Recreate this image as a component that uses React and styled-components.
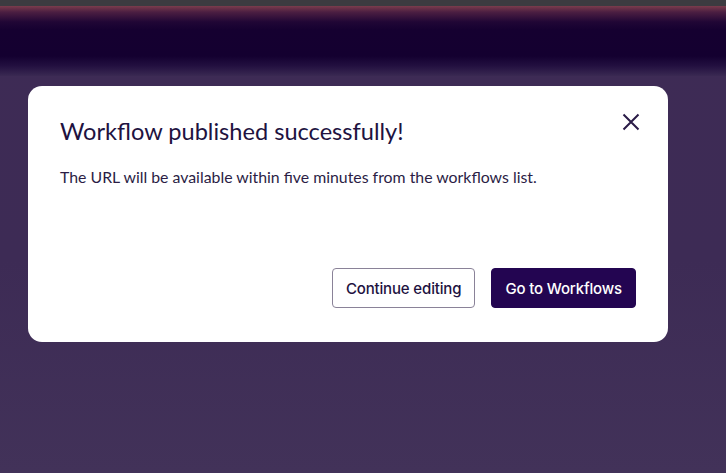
import React from 'react';
import styled, { createGlobalStyle } from 'styled-components';

const GlobalStyle = createGlobalStyle`
  html, body {
    margin: 0;
    padding: 0;
    height: 100%;
  }
  body {
    background: #3f2d57;
    font-family: Lato, "Noto Sans", sans-serif;
    overflow: hidden;
  }
`;

const Page = styled.div`
  width: 726px;
  height: 473px;
  display: flex;
  flex-direction: column;
  background: linear-gradient(180deg, #3e2b55 0%, #3d2b55 55%, #423259 100%);
`;

const TopStrip = styled.div`
  height: 6px;
  background: #3c3b40;
`;

const Header = styled.div`
  height: 70px;
  background: linear-gradient(
    180deg,
    #7a3c4c 0px,
    #4c1f42 6px,
    #200635 16px,
    #150030 24px,
    #140030 50px,
    #231040 60px,
    #3a2952 70px
  );
`;

const Body = styled.div`
  flex: 1;
`;

const Overlay = styled.div`
  position: fixed;
  inset: 0;
  padding: 86px 0 0 28px;
  display: flex;
  align-items: flex-start;
`;

const Dialog = styled.div`
  width: 640px;
  height: 256px;
  box-sizing: border-box;
  background: #ffffff;
  border-radius: 14px;
  padding: 30px 32px 34px 32px;
  display: flex;
  flex-direction: column;
  position: relative;
`;

const Title = styled.h2`
  margin: 0;
  font-family: Lato, "Noto Sans", sans-serif;
  font-size: 23.6px;
  font-weight: 400;
  line-height: 30px;
  color: #21123f;
`;

const Message = styled.p`
  margin: 20px 0 0;
  font-size: 15.85px;
  line-height: 22px;
  color: #2b1d45;
`;

const CloseButton = styled.button`
  position: absolute;
  top: 24px;
  right: 25px;
  width: 24px;
  height: 24px;
  padding: 0;
  border: none;
  background: none;
  display: flex;
  align-items: center;
  justify-content: center;
  color: #2a1b47;
  cursor: pointer;
`;

const Actions = styled.div`
  margin-top: auto;
  display: flex;
  justify-content: flex-end;
  gap: 16px;
`;

const Button = styled.button`
  height: 40px;
  box-sizing: border-box;
  padding: 0 13px;
  border-radius: 4px;
  font-family: Inter, "Noto Sans", sans-serif;
  font-size: 15px;
  font-weight: 500;
  letter-spacing: -0.15px;
  cursor: pointer;
  border: 1px solid ${p => (p.$primary ? '#230551' : '#8a8298')};
  background: ${p => (p.$primary ? '#230551' : '#ffffff')};
  color: ${p => (p.$primary ? '#ffffff' : '#21123f')};
`;

const App = () => {
  return (
    <>
      <GlobalStyle />
      <Page>
        <TopStrip />
        <Header />
        <Body />
      </Page>
      <Overlay>
        <Dialog role="dialog">
          <Title>Workflow published successfully!</Title>
          <Message>The URL will be available within five minutes from the workflows list.</Message>
          <CloseButton aria-label="Close">
            <svg width="18" height="18" viewBox="0 0 18 18" fill="none">
              <path d="M1.5 1.5L16.5 16.5M16.5 1.5L1.5 16.5" stroke="currentColor" strokeWidth="2" />
            </svg>
          </CloseButton>
          <Actions>
            <Button>Continue editing</Button>
            <Button $primary>Go to Workflows</Button>
          </Actions>
        </Dialog>
      </Overlay>
    </>
  );
};

export default App;
